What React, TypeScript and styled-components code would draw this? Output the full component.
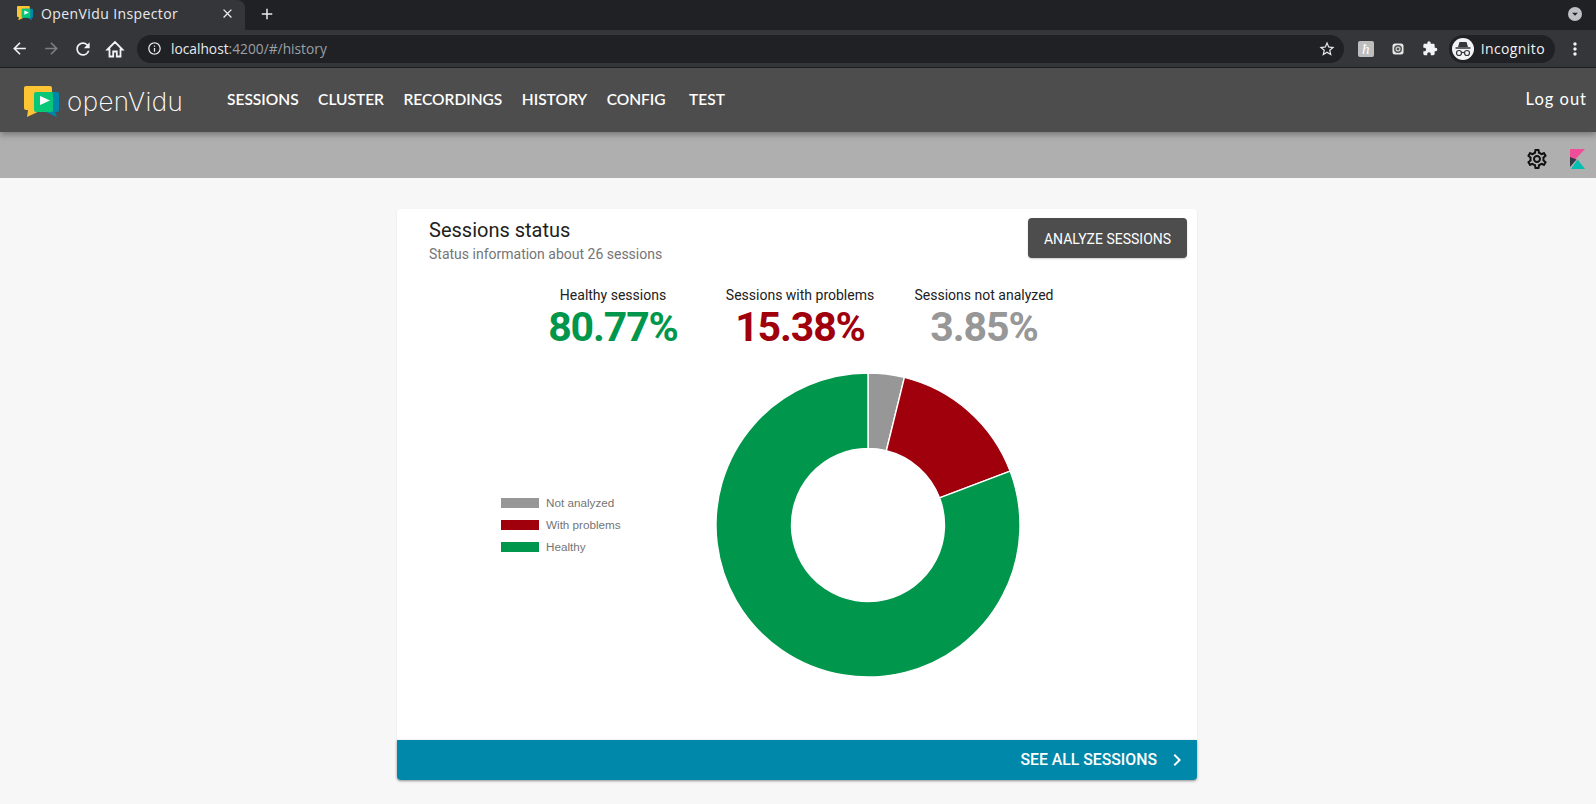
import React from 'react';
import styled, { createGlobalStyle } from 'styled-components';
import {
  MdAdd,
  MdArrowBack,
  MdArrowDropDown,
  MdArrowForward,
  MdChevronRight,
  MdClose,
  MdExtension,
  MdInfoOutline,
  MdMoreVert,
  MdOutlineSettings,
  MdRefresh,
  MdStarBorder,
} from 'react-icons/md';

const GlobalStyle = createGlobalStyle`
  html, body {
    margin: 0;
    height: 804px;
    overflow: hidden;
    background: #f7f7f7;
    font-family: Roboto, "Liberation Sans", sans-serif;
  }
`;

const TabStrip = styled.div`
  display: flex;
  align-items: center;
  height: 30px;
  background: #202124;
  color: #e8eaed;
`;

const Tab = styled.div`
  display: flex;
  align-items: center;
  box-sizing: border-box;
  width: 245px;
  height: 30px;
  padding: 0 10px 3px 17px;
  background: #35363a;
  border-radius: 0 8px 0 0;
  font: 14px/20px "Open Sans", sans-serif;
  letter-spacing: 0.4px;
  svg:last-child {
    margin-left: auto;
  }
`;

const TabTitle = styled.span`
  margin-left: 8px;
`;

const NewTab = styled.div`
  display: flex;
  margin-left: 13px;
  margin-bottom: 3px;
`;

const TabMenu = styled.div`
  display: flex;
  align-items: center;
  justify-content: center;
  width: 14px;
  height: 14px;
  margin-left: auto;
  margin-right: 14px;
  margin-bottom: 3px;
  border-radius: 50%;
  background: #bdc1c6;
  color: #202124;
`;

const Toolbar = styled.div`
  display: flex;
  align-items: center;
  box-sizing: border-box;
  height: 38px;
  padding: 0 11px 0 9px;
  background: #35363a;
  border-bottom: 1px solid #202124;
  color: #e8eaed;
`;

const ToolButton = styled.div<{ $dim?: boolean }>`
  display: flex;
  align-items: center;
  justify-content: center;
  width: 20px;
  margin-right: 12px;
  color: ${(p) => (p.$dim ? '#7d7f83' : '#f1f3f4')};
`;

const Omnibox = styled.div`
  display: flex;
  flex: 1;
  align-items: center;
  height: 28px;
  padding: 0 8px 0 10px;
  background: #202124;
  border-radius: 14px;
  font: 13.75px/20px "Open Sans", sans-serif;
`;

const UrlHost = styled.span`
  margin-left: 9px;
  color: #e8eaed;
`;

const UrlPath = styled.span`
  flex: 1;
  color: #9aa0a6;
`;

const ExtensionArea = styled.div`
  display: flex;
  align-items: center;
  margin-left: 14px;
  color: #f1f3f4;
`;

const ExtSquare = styled.div`
  display: flex;
  align-items: center;
  justify-content: center;
  width: 16px;
  height: 16px;
  border-radius: 2px;
  background: #bdbdbd;
  color: #fff;
  font: italic 15px/16px "Liberation Serif", serif;
`;

const ExtSlot = styled.div`
  display: flex;
  justify-content: center;
  width: 16px;
  margin-left: 16px;
`;

const IncognitoPill = styled.div`
  display: flex;
  align-items: center;
  height: 28px;
  margin-left: 11px;
  padding: 0 10px 0 3px;
  background: #202124;
  border-radius: 14px;
  font: 14px/20px "Open Sans", sans-serif;
  letter-spacing: 0.4px;
`;

const Avatar = styled.div`
  display: flex;
  align-items: center;
  justify-content: center;
  width: 22px;
  height: 22px;
  margin-right: 7px;
  border-radius: 50%;
  background: #f1f3f4;
`;

const DotsButton = styled.div`
  display: flex;
  margin-left: 10px;
`;

const NavBar = styled.div`
  position: relative;
  display: flex;
  align-items: center;
  box-sizing: border-box;
  height: 64px;
  padding: 0 9px 3px 24px;
  background: #4d4d4d;
  box-shadow: 0 3px 6px rgba(0, 0, 0, 0.3);
  color: #fff;
`;

const Brand = styled.div`
  display: flex;
  align-items: center;
  width: 203px;
  margin-top: 6px;
`;

const BrandName = styled.span`
  margin-left: 8px;
  font: 200 26px/32px Inter, sans-serif;
  letter-spacing: 0.4px;
`;

const NavLinks = styled.div`
  display: flex;
  gap: 19.5px;
`;

const NavLink = styled.a<{ $extra?: number }>`
  margin-left: ${(p) => p.$extra ?? 0}px;
  font: 600 15.5px/20px Lato, sans-serif;
`;

const LogOut = styled.a`
  margin-left: auto;
  font: 400 16.5px/20px Lato, sans-serif;
  letter-spacing: 1px;
`;

const SubBar = styled.div`
  display: flex;
  align-items: center;
  justify-content: flex-end;
  gap: 21px;
  box-sizing: border-box;
  height: 46px;
  padding: 8px 11px 0 0;
  background: #afafaf;
  color: #111;
`;

const Content = styled.main`
  display: flex;
  justify-content: center;
  padding: 31px 2px 0 0;
`;

const Card = styled.section`
  display: flex;
  flex-direction: column;
  width: 800px;
  height: 571px;
  background: #fff;
  border-radius: 4px;
  box-shadow: 0 1px 2px rgba(0, 0, 0, 0.1);
`;

const CardHeader = styled.header`
  display: flex;
  justify-content: space-between;
  padding: 9px 10px 0 32px;
`;

const CardTitle = styled.h2`
  margin: -1px 0 1px;
  color: #212121;
  font: 400 20px/26px Roboto, sans-serif;
`;

const CardSubtitle = styled.p`
  margin: 0;
  color: #757575;
  font: 400 14px/20px Roboto, sans-serif;
`;

const AnalyzeButton = styled.button`
  box-sizing: border-box;
  width: 159px;
  height: 40px;
  border: 0;
  border-radius: 4px;
  background: #4d4d4d;
  color: #fff;
  font: 400 14px/40px Roboto, sans-serif;
  box-shadow: 0 1px 2px rgba(0, 0, 0, 0.2);
`;

const Stats = styled.div`
  display: flex;
  gap: 39px;
  margin-top: 21px;
  padding-left: 143px;
`;

const Stat = styled.div<{ $width: number }>`
  width: ${(p) => p.$width}px;
  text-align: center;
  white-space: nowrap;
`;

const StatLabel = styled.div`
  color: #212121;
  font: 400 14px/20px Roboto, sans-serif;
`;

const StatValue = styled.div<{ $color: string }>`
  color: ${(p) => p.$color};
  font: 700 41px/44px Roboto, sans-serif;
  letter-spacing: -1.1px;
`;

const ChartRow = styled.div`
  display: flex;
  align-items: center;
  flex: 1;
  padding-left: 104px;
`;

const Legend = styled.ul`
  display: flex;
  flex-direction: column;
  gap: 8px;
  width: 212px;
  margin: -40px 0 0;
  padding: 0;
  list-style: none;
`;

const LegendItem = styled.li`
  display: flex;
  align-items: center;
  gap: 7px;
  height: 14px;
  color: #757575;
  font: 11.7px/14px "Liberation Sans", Arial, sans-serif;
`;

const Swatch = styled.span<{ $color: string }>`
  width: 38px;
  height: 10px;
  background: ${(p) => p.$color};
`;

const Donut = styled.svg`
  flex: none;
  margin-top: -40px;
`;

const CardFooter = styled.a`
  display: flex;
  align-items: center;
  justify-content: flex-end;
  gap: 8px;
  height: 40px;
  padding-right: 8px;
  background: #0088aa;
  color: #fff;
  border-radius: 0 0 4px 4px;
  box-shadow: 0 1px 3px rgba(0, 0, 0, 0.35);
  font: 500 15.8px/40px Roboto, sans-serif;
`;

const COLORS = { healthy: '#00964b', problems: '#a0000b', none: '#979797' };

// start angle at 12 o'clock, going clockwise
const slices = [
  { value: 3.85, color: COLORS.none },
  { value: 15.38, color: COLORS.problems },
  { value: 80.77, color: COLORS.healthy },
];

const polar = (r: number, pct: number) => {
  const a = (pct / 100) * 2 * Math.PI;
  return `${(155 + r * Math.sin(a)).toFixed(2)} ${(155 - r * Math.cos(a)).toFixed(2)}`;
};

const slicePath = (from: number, to: number) => {
  const R = 152;
  const r = 76.5;
  const big = to - from > 50 ? 1 : 0;
  return `M${polar(R, from)}A${R} ${R} 0 ${big} 1 ${polar(R, to)}L${polar(r, to)}A${r} ${r} 0 ${big} 0 ${polar(r, from)}Z`;
};

const SessionsDonut = () => {
  let start = 0;
  return (
    <Donut width="310" height="310" viewBox="0 0 310 310">
      {slices.map((s) => {
        const d = slicePath(start, start + s.value);
        start += s.value;
        return <path key={s.color} d={d} fill={s.color} stroke="#fff" strokeWidth="1.4" />;
      })}
    </Donut>
  );
};

const BubbleMark = ({ size }: { size: number }) => (
  <svg width={size} height={(size * 31) / 35} viewBox="0 0 35 31">
    <path d="M2 0h24a2 2 0 0 1 2 2v20a2 2 0 0 1-2 2H18L3 31l1-7H2a2 2 0 0 1-2-2V2a2 2 0 0 1 2-2z" fill="#fdc434" />
    <path d="M12 6h21a2 2 0 0 1 2 2v16a2 2 0 0 1-2 2h-2l2 5-11-5H12z" fill="#0088aa" />
    <path d="M12 6h15a2 2 0 0 1 2 2v16a2 2 0 0 1-2 2H12a2 2 0 0 1-2-2V8a2 2 0 0 1 2-2z" fill="#08c878" />
    <path d="M16 10l10 4.500-10 4.500z" fill="#fff" />
  </svg>
);

const HomeIcon = () => (
  <svg width="20" height="20" viewBox="0 0 20 20" fill="none" stroke="currentColor" strokeWidth="1.800">
    <path d="M2.500 10.500L10 3l7.500 7.500H15.500V17.500H11.800V12.500H8.200V17.500H4.500V10.500z" strokeLinejoin="miter" />
  </svg>
);

const IncognitoIcon = () => (
  <svg width="18" height="18" viewBox="0 0 18 18" fill="none">
    <path d="M5.500 2h7l1.500 5H4z" fill="#35363a" />
    <path d="M1.500 8h15" stroke="#35363a" strokeWidth="1.500" />
    <circle cx="5" cy="13" r="2.500" stroke="#35363a" strokeWidth="1.200" />
    <circle cx="13" cy="13" r="2.500" stroke="#35363a" strokeWidth="1.200" />
    <path d="M7.500 12.500h3" stroke="#35363a" strokeWidth="1.200" />
  </svg>
);

const TargetIcon = () => (
  <svg width="12" height="12" viewBox="0 0 12 12" fill="none">
    <rect x="0.500" y="0.500" width="11" height="11" rx="2.500" fill="#e8e8e8" />
    <circle cx="6" cy="6" r="4" fill="#555" />
    <circle cx="6" cy="6" r="2.500" fill="#ccc" />
    <circle cx="6" cy="6" r="1.300" fill="#555" />
  </svg>
);

const KibanaLogo = () => (
  <svg width="15" height="20" viewBox="0 0 15 20">
    <path d="M0 0h15L0 16z" fill="#f04e98" />
    <path d="M0 8L6.500 10.500 0 18z" fill="#343741" />
    <path d="M1 20l6.500-9.500L15 20z" fill="#00bfb3" />
  </svg>
);

export default function App() {
  return (
    <>
      <GlobalStyle />
      <TabStrip>
        <Tab>
          <BubbleMark size={16} />
          <TabTitle>OpenVidu Inspector</TabTitle>
          <MdClose size={15} />
        </Tab>
        <NewTab>
          <MdAdd size={18} />
        </NewTab>
        <TabMenu>
          <MdArrowDropDown size={16} />
        </TabMenu>
      </TabStrip>
      <Toolbar>
        <ToolButton>
          <MdArrowBack size={19} />
        </ToolButton>
        <ToolButton $dim>
          <MdArrowForward size={19} />
        </ToolButton>
        <ToolButton>
          <MdRefresh size={20} />
        </ToolButton>
        <ToolButton>
          <HomeIcon />
        </ToolButton>
        <Omnibox>
          <MdInfoOutline size={15} />
          <UrlHost>localhost</UrlHost>
          <UrlPath>:4200/#/history</UrlPath>
          <MdStarBorder size={18} />
        </Omnibox>
        <ExtensionArea>
          <ExtSquare>ħ</ExtSquare>
          <ExtSlot>
            <TargetIcon />
          </ExtSlot>
          <ExtSlot>
            <MdExtension size={17} />
          </ExtSlot>
          <IncognitoPill>
            <Avatar>
              <IncognitoIcon />
            </Avatar>
            Incognito
          </IncognitoPill>
          <DotsButton>
            <MdMoreVert size={20} />
          </DotsButton>
        </ExtensionArea>
      </Toolbar>
      <NavBar>
        <Brand>
          <BubbleMark size={35} />
          <BrandName>openVidu</BrandName>
        </Brand>
        <NavLinks>
          <NavLink>SESSIONS</NavLink>
          <NavLink>CLUSTER</NavLink>
          <NavLink>RECORDINGS</NavLink>
          <NavLink>HISTORY</NavLink>
          <NavLink>CONFIG</NavLink>
          <NavLink $extra={4}>TEST</NavLink>
        </NavLinks>
        <LogOut>Log out</LogOut>
      </NavBar>
      <SubBar>
        <MdOutlineSettings size={24} />
        <KibanaLogo />
      </SubBar>
      <Content>
        <Card>
          <CardHeader>
            <div>
              <CardTitle>Sessions status</CardTitle>
              <CardSubtitle>Status information about 26 sessions</CardSubtitle>
            </div>
            <AnalyzeButton>ANALYZE SESSIONS</AnalyzeButton>
          </CardHeader>
          <Stats>
            <Stat $width={146}>
              <StatLabel>Healthy sessions</StatLabel>
              <StatValue $color={COLORS.healthy}>80.77%</StatValue>
            </Stat>
            <Stat $width={150}>
              <StatLabel>Sessions with problems</StatLabel>
              <StatValue $color={COLORS.problems}>15.38%</StatValue>
            </Stat>
            <Stat $width={140}>
              <StatLabel>Sessions not analyzed</StatLabel>
              <StatValue $color={COLORS.none}>3.85%</StatValue>
            </Stat>
          </Stats>
          <ChartRow>
            <Legend>
              <LegendItem>
                <Swatch $color={COLORS.none} />
                Not analyzed
              </LegendItem>
              <LegendItem>
                <Swatch $color={COLORS.problems} />
                With problems
              </LegendItem>
              <LegendItem>
                <Swatch $color={COLORS.healthy} />
                Healthy
              </LegendItem>
            </Legend>
            <SessionsDonut />
          </ChartRow>
          <CardFooter>
            SEE ALL SESSIONS
            <MdChevronRight size={24} />
          </CardFooter>
        </Card>
      </Content>
    </>
  );
}
